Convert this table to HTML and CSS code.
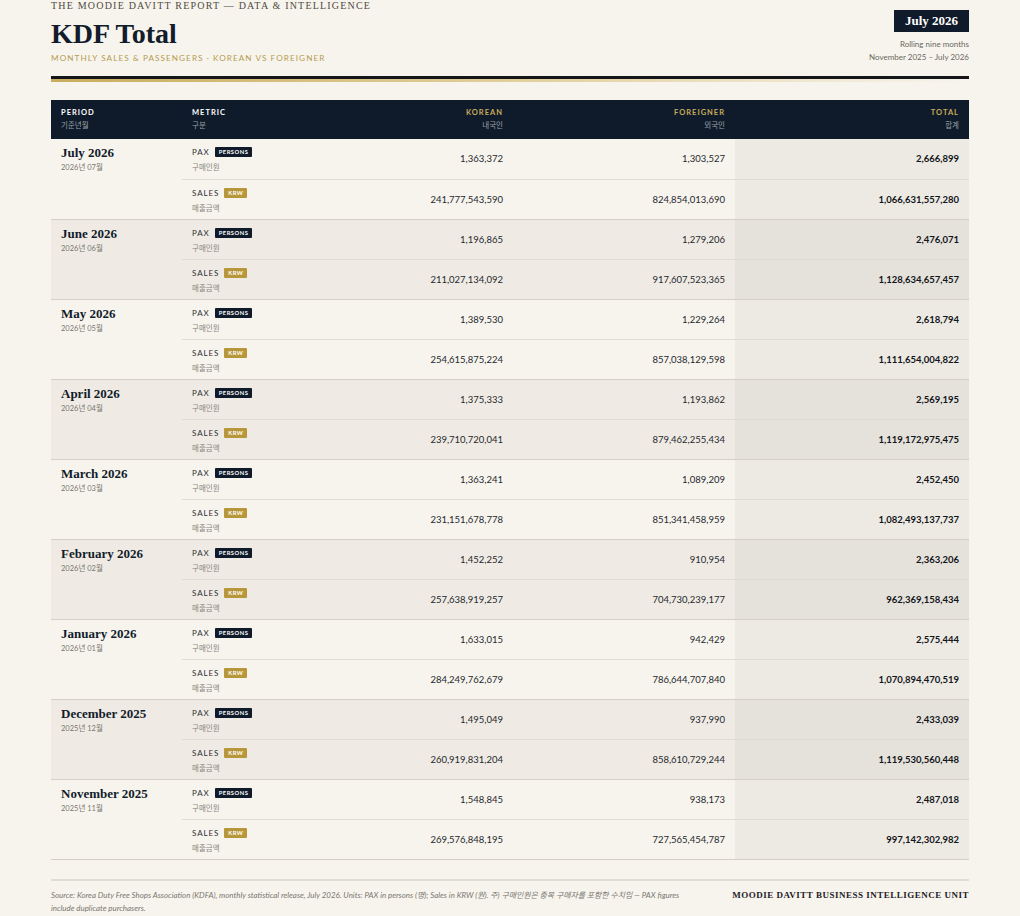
FILE: index.html
```html
<!DOCTYPE html>
<html lang="en">
<head>
<meta charset="utf-8">
<title>KDF Total</title>
<link rel="stylesheet" href="styles.css">
</head>
<body>
<div class="page">
  <header class="masthead">
    <div class="mast-left">
      <div class="kicker">THE MOODIE DAVITT REPORT — DATA &amp; INTELLIGENCE</div>
      <h1 class="title">KDF Total</h1>
      <div class="subtitle">MONTHLY SALES &amp; PASSENGERS · KOREAN VS FOREIGNER</div>
    </div>
    <div class="mast-right">
      <div class="edition">July 2026</div>
      <div class="range">Rolling nine months</div>
      <div class="range">November 2025 – July 2026</div>
    </div>
  </header>
  <div class="rule"></div>

  <table class="data">
    <colgroup>
      <col class="c-period"><col class="c-metric"><col class="c-num"><col class="c-num"><col class="c-total">
    </colgroup>
    <thead>
      <tr>
        <th class="h-left"><span class="h-en">PERIOD</span><span class="h-ko">기준년월</span></th>
        <th class="h-left"><span class="h-en">METRIC</span><span class="h-ko">구분</span></th>
        <th class="h-right"><span class="h-en gold">KOREAN</span><span class="h-ko">내국인</span></th>
        <th class="h-right"><span class="h-en gold">FOREIGNER</span><span class="h-ko">외국인</span></th>
        <th class="h-right"><span class="h-en gold">TOTAL</span><span class="h-ko">합계</span></th>
      </tr>
    </thead>
    <tbody class="grp">
      <tr class="pax"><td class="period" rowspan="2"><span class="month">July 2026</span><span class="month-ko">2026년 07월</span></td>
        <td class="metric"><span class="m-en">PAX <b class="badge navy">PERSONS</b></span><span class="m-ko">구매인원</span></td>
        <td class="num">1,363,372</td><td class="num">1,303,527</td><td class="num total">2,666,899</td></tr>
      <tr class="sales"><td class="metric"><span class="m-en">SALES <b class="badge gold-b">KRW</b></span><span class="m-ko">매출금액</span></td>
        <td class="num">241,777,543,590</td><td class="num">824,854,013,690</td><td class="num total">1,066,631,557,280</td></tr>
    </tbody>
    <tbody class="grp alt">
      <tr class="pax"><td class="period" rowspan="2"><span class="month">June 2026</span><span class="month-ko">2026년 06월</span></td>
        <td class="metric"><span class="m-en">PAX <b class="badge navy">PERSONS</b></span><span class="m-ko">구매인원</span></td>
        <td class="num">1,196,865</td><td class="num">1,279,206</td><td class="num total">2,476,071</td></tr>
      <tr class="sales"><td class="metric"><span class="m-en">SALES <b class="badge gold-b">KRW</b></span><span class="m-ko">매출금액</span></td>
        <td class="num">211,027,134,092</td><td class="num">917,607,523,365</td><td class="num total">1,128,634,657,457</td></tr>
    </tbody>
    <tbody class="grp">
      <tr class="pax"><td class="period" rowspan="2"><span class="month">May 2026</span><span class="month-ko">2026년 05월</span></td>
        <td class="metric"><span class="m-en">PAX <b class="badge navy">PERSONS</b></span><span class="m-ko">구매인원</span></td>
        <td class="num">1,389,530</td><td class="num">1,229,264</td><td class="num total">2,618,794</td></tr>
      <tr class="sales"><td class="metric"><span class="m-en">SALES <b class="badge gold-b">KRW</b></span><span class="m-ko">매출금액</span></td>
        <td class="num">254,615,875,224</td><td class="num">857,038,129,598</td><td class="num total">1,111,654,004,822</td></tr>
    </tbody>
    <tbody class="grp alt">
      <tr class="pax"><td class="period" rowspan="2"><span class="month">April 2026</span><span class="month-ko">2026년 04월</span></td>
        <td class="metric"><span class="m-en">PAX <b class="badge navy">PERSONS</b></span><span class="m-ko">구매인원</span></td>
        <td class="num">1,375,333</td><td class="num">1,193,862</td><td class="num total">2,569,195</td></tr>
      <tr class="sales"><td class="metric"><span class="m-en">SALES <b class="badge gold-b">KRW</b></span><span class="m-ko">매출금액</span></td>
        <td class="num">239,710,720,041</td><td class="num">879,462,255,434</td><td class="num total">1,119,172,975,475</td></tr>
    </tbody>
    <tbody class="grp">
      <tr class="pax"><td class="period" rowspan="2"><span class="month">March 2026</span><span class="month-ko">2026년 03월</span></td>
        <td class="metric"><span class="m-en">PAX <b class="badge navy">PERSONS</b></span><span class="m-ko">구매인원</span></td>
        <td class="num">1,363,241</td><td class="num">1,089,209</td><td class="num total">2,452,450</td></tr>
      <tr class="sales"><td class="metric"><span class="m-en">SALES <b class="badge gold-b">KRW</b></span><span class="m-ko">매출금액</span></td>
        <td class="num">231,151,678,778</td><td class="num">851,341,458,959</td><td class="num total">1,082,493,137,737</td></tr>
    </tbody>
    <tbody class="grp alt">
      <tr class="pax"><td class="period" rowspan="2"><span class="month">February 2026</span><span class="month-ko">2026년 02월</span></td>
        <td class="metric"><span class="m-en">PAX <b class="badge navy">PERSONS</b></span><span class="m-ko">구매인원</span></td>
        <td class="num">1,452,252</td><td class="num">910,954</td><td class="num total">2,363,206</td></tr>
      <tr class="sales"><td class="metric"><span class="m-en">SALES <b class="badge gold-b">KRW</b></span><span class="m-ko">매출금액</span></td>
        <td class="num">257,638,919,257</td><td class="num">704,730,239,177</td><td class="num total">962,369,158,434</td></tr>
    </tbody>
    <tbody class="grp">
      <tr class="pax"><td class="period" rowspan="2"><span class="month">January 2026</span><span class="month-ko">2026년 01월</span></td>
        <td class="metric"><span class="m-en">PAX <b class="badge navy">PERSONS</b></span><span class="m-ko">구매인원</span></td>
        <td class="num">1,633,015</td><td class="num">942,429</td><td class="num total">2,575,444</td></tr>
      <tr class="sales"><td class="metric"><span class="m-en">SALES <b class="badge gold-b">KRW</b></span><span class="m-ko">매출금액</span></td>
        <td class="num">284,249,762,679</td><td class="num">786,644,707,840</td><td class="num total">1,070,894,470,519</td></tr>
    </tbody>
    <tbody class="grp alt">
      <tr class="pax"><td class="period" rowspan="2"><span class="month">December 2025</span><span class="month-ko">2025년 12월</span></td>
        <td class="metric"><span class="m-en">PAX <b class="badge navy">PERSONS</b></span><span class="m-ko">구매인원</span></td>
        <td class="num">1,495,049</td><td class="num">937,990</td><td class="num total">2,433,039</td></tr>
      <tr class="sales"><td class="metric"><span class="m-en">SALES <b class="badge gold-b">KRW</b></span><span class="m-ko">매출금액</span></td>
        <td class="num">260,919,831,204</td><td class="num">858,610,729,244</td><td class="num total">1,119,530,560,448</td></tr>
    </tbody>
    <tbody class="grp">
      <tr class="pax"><td class="period" rowspan="2"><span class="month">November 2025</span><span class="month-ko">2025년 11월</span></td>
        <td class="metric"><span class="m-en">PAX <b class="badge navy">PERSONS</b></span><span class="m-ko">구매인원</span></td>
        <td class="num">1,548,845</td><td class="num">938,173</td><td class="num total">2,487,018</td></tr>
      <tr class="sales"><td class="metric"><span class="m-en">SALES <b class="badge gold-b">KRW</b></span><span class="m-ko">매출금액</span></td>
        <td class="num">269,576,848,195</td><td class="num">727,565,454,787</td><td class="num total">997,142,302,982</td></tr>
    </tbody>
  </table>

  <footer class="foot">
    <p class="source">Source: Korea Duty Free Shops Association (KDFA), monthly statistical release, July 2026. Units: PAX in persons (명); Sales in KRW (원). 주) 구매인원은 중복 구매자를 포함한 수치임 — PAX figures include duplicate purchasers.</p>
    <div class="unit">MOODIE DAVITT BUSINESS INTELLIGENCE UNIT</div>
  </footer>
</div>
</body>
</html>
```

FILE: styles.css
```css
* { box-sizing: border-box; }

html, body {
  margin: 0;
  padding: 0;
  background: #f7f4ee;
}

body {
  font-family: Lato, "Noto Sans CJK KR", sans-serif;
  color: #1e2126;
}

.page {
  width: 918px;
  margin: 0 auto;
}

/* Masthead */
.masthead {
  display: flex;
  justify-content: space-between;
  align-items: flex-start;
  height: 76px;
}

.kicker {
  font-family: "Liberation Serif", "Noto Sans CJK KR", serif;
  font-size: 10px;
  letter-spacing: 1.2px;
  color: #4f4a40;
  line-height: 11px;
}

.title {
  font-family: "Liberation Serif", serif;
  font-weight: 700;
  font-size: 28px;
  line-height: 32px;
  margin: 7px 0 0 0;
  color: #121c2b;
}

.subtitle {
  font-size: 8.2px;
  letter-spacing: 1.05px;
  color: #b59c4e;
  margin-top: 3px;
  line-height: 11px;
}

.mast-right {
  display: flex;
  flex-direction: column;
  align-items: flex-end;
  padding-top: 10px;
}

.edition {
  background: #0f1b2a;
  color: #fff;
  font-family: "Liberation Serif", serif;
  font-weight: 700;
  font-size: 13px;
  line-height: 22px;
  padding: 0 11px;
  margin-bottom: 6px;
}

.range {
  font-size: 8px;
  color: #6b6760;
  line-height: 12.5px;
}

.rule {
  height: 6px;
  border-top: 3px solid #15161a;
  background: linear-gradient(90deg, #c9ad5e 0%, #e3d2a1 55%, rgba(247, 244, 238, 0) 100%);
  background-size: 100% 3px;
  background-repeat: no-repeat;
  margin-bottom: 18px;
}

/* Table */
.data {
  width: 918px;
  border-collapse: collapse;
  table-layout: fixed;
}

.c-period { width: 131px; }
.c-metric { width: 109px; }
.c-num { width: 222px; }
.c-total { width: 234px; }

.data thead tr {
  background: #0f1b2a;
}

.data th {
  height: 39px;
  padding: 0 10px;
  vertical-align: middle;
  font-weight: 700;
}

.h-left { text-align: left; }
.h-right { text-align: right; }

.h-en {
  display: block;
  font-size: 7.5px;
  letter-spacing: 1px;
  color: #ffffff;
  line-height: 11px;
}

.h-en.gold { color: #c8ac5c; }

.h-ko {
  display: block;
  font-weight: 400;
  font-size: 7.5px;
  color: #9aa0a8;
  line-height: 12px;
  margin-top: 2px;
}

.grp { background: #f7f4ee; }
.grp.alt { background: #efebe4; }

.grp tr.sales td,
.grp td.period { border-bottom: 1px solid #d6d0c4; }
.grp tr.pax td.metric,
.grp tr.pax td.num { border-bottom: 1px solid #e0dbd1; }

.data td {
  height: 40px;
  padding: 0 10px;
}

.period {
  vertical-align: top;
  padding-top: 6px !important;
}

.month {
  display: block;
  font-family: "Liberation Serif", serif;
  font-weight: 700;
  font-size: 13px;
  line-height: 15px;
  color: #121c2b;
}

.month-ko {
  display: block;
  font-size: 7.5px;
  color: #7a766e;
  line-height: 11px;
  margin-top: 2px;
}

.metric {
  vertical-align: top;
  padding-top: 8px !important;
}

.m-en {
  display: flex;
  align-items: center;
  font-size: 8px;
  letter-spacing: 0.9px;
  color: #2c2f35;
  line-height: 10px;
}

.badge {
  display: inline-block;
  margin-left: 5px;
  font-size: 5.8px;
  letter-spacing: 0.5px;
  font-weight: 700;
  color: #fff;
  line-height: 10px;
  padding: 0 4px;
  border-radius: 1px;
}

.badge.navy { background: #0f1b2a; }
.badge.gold-b { background: #b8973a; }

.m-ko {
  display: block;
  font-size: 7.5px;
  color: #8a867e;
  line-height: 11px;
  margin-top: 5px;
}

.num {
  text-align: right;
  vertical-align: middle;
  font-size: 9.5px;
  color: #25282d;
}

.num.total {
  font-weight: 700;
  color: #111418;
  background: rgba(30, 30, 20, 0.045);
}

/* Footer */
.foot {
  margin-top: 19px;
  border-top: 2px solid #e2ddd3;
  display: flex;
  justify-content: space-between;
  align-items: flex-start;
  padding-top: 8px;
}

.source {
  margin: 0;
  width: 640px;
  font-style: italic;
  font-size: 7.9px;
  line-height: 13px;
  color: #7a766e;
}

.unit {
  font-family: "Liberation Serif", serif;
  font-weight: 700;
  font-size: 9px;
  letter-spacing: 0.5px;
  color: #1e2126;
  line-height: 13px;
  white-space: nowrap;
}
```
